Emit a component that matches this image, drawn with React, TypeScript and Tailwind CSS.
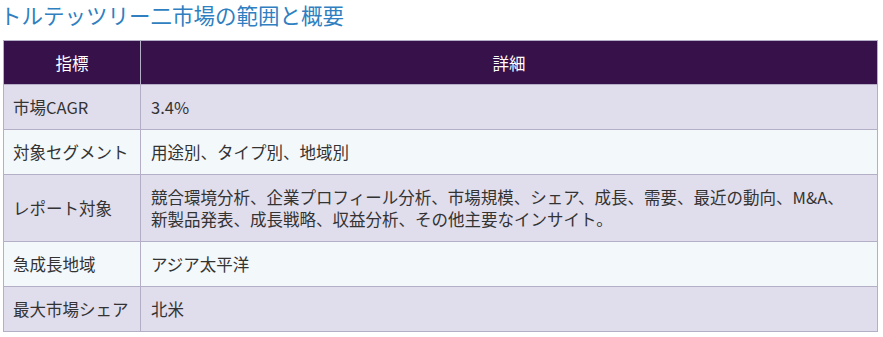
import React from 'react';

const rows: { label: string; value: React.ReactNode }[] = [
  { label: '市場CAGR', value: '3.4%' },
  { label: '対象セグメント', value: '用途別、タイプ別、地域別' },
  {
    label: 'レポート対象',
    value: (
      <>
        競合環境分析、企業プロフィール分析、市場規模、シェア、成長、需要、最近の動向、M&amp;A、
        <br />
        新製品発表、成長戦略、収益分析、その他主要なインサイト。
      </>
    ),
  },
  { label: '急成長地域', value: 'アジア太平洋' },
  { label: '最大市場シェア', value: '北米' },
];

export default function App() {
  return (
    <div className="bg-white w-[883px] h-[337px] font-['Noto_Sans_CJK_JP','Noto_Sans',sans-serif]">
      {/* Title */}
      <h2 className="text-[21.5px] leading-[30px] text-[#2f7fc1] h-[40px]">
        トルテッツリー二市場の範囲と概要
      </h2>

      {/* Summary table */}
      <div className="pl-[3px] pr-[5px]">
        <table className="w-full border-collapse text-[16.5px] leading-[22px] text-[#333]">
          <thead>
            <tr className="bg-[#36114a] text-white">
              <th className="w-[137px] h-[44px] border border-[#b4aec6] font-normal text-center">指標</th>
              <th className="h-[44px] border border-[#b4aec6] font-normal text-center">詳細</th>
            </tr>
          </thead>
          <tbody>
            {rows.map((r, i) => (
              <tr key={r.label} className={i % 2 === 0 ? 'bg-[#e0ddec]' : 'bg-[#f3f8fb]'}>
                <td className="border border-[#b4aec6] px-[9px] py-[11px] align-middle whitespace-nowrap">{r.label}</td>
                <td className="border border-[#b4aec6] px-[10px] py-[11px] align-middle">{r.value}</td>
              </tr>
            ))}
          </tbody>
        </table>
      </div>
    </div>
  );
}
